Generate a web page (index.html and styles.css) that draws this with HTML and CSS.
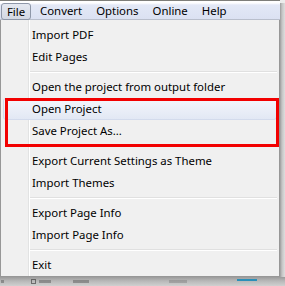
FILE: index.html
```html
<!DOCTYPE html>
<html>
<head>
<meta charset="utf-8">
<link rel="stylesheet" href="styles.css">
</head>
<body>
<div class="frame">
  <div class="upper">
    <div class="main">
      <div class="menubar">
        <span class="mb-item active">File</span>
        <span class="mb-item">Convert</span>
        <span class="mb-item">Options</span>
        <span class="mb-item">Online</span>
        <span class="mb-item">Help</span>
      </div>
      <div class="menu">
        <div class="item">Import PDF</div>
        <div class="item">Edit Pages</div>
        <div class="sep"></div>
        <div class="item">Open the project from output folder</div>
        <div class="item hover">Open Project</div>
        <div class="item">Save Project As...</div>
        <div class="sep"></div>
        <div class="item">Export Current Settings as Theme</div>
        <div class="item">Import Themes</div>
        <div class="sep"></div>
        <div class="item">Export Page Info</div>
        <div class="item">Import Page Info</div>
        <div class="sep"></div>
        <div class="item">Exit</div>
        <div class="callout"></div>
      </div>
    </div>
    <div class="rshadow"></div>
  </div>
  <div class="bottom">
    <span class="bt b1"></span>
    <span class="bt b2"></span>
    <span class="bt b3"></span>
    <span class="bt b4"></span>
    <span class="bt b5"></span>
    <span class="bt b6"></span>
  </div>
</div>
</body>
</html>
```
FILE: styles.css
```css
html, body {
  margin: 0;
  padding: 0;
}
body {
  width: 285px;
  height: 286px;
  overflow: hidden;
  background: #ececec;
  font-family: "Noto Sans", "Open Sans", sans-serif;
  font-size: 11.4px;
  color: #000;
}
.frame {
  display: flex;
  flex-direction: column;
  width: 285px;
  height: 286px;
}
.upper {
  display: flex;
  height: 277px;
}
.main {
  width: 280px;
  display: flex;
  flex-direction: column;
}
.rshadow {
  width: 5px;
  margin-top: 3px;
  background: linear-gradient(to right, #9c9c9c, #c4c4c4 2px, #dedede);
}
.menubar {
  box-sizing: border-box;
  height: 20px;
  border-top: 1px solid #7e7e7a;
  border-bottom: 1px solid #b9bfcc;
  background: linear-gradient(#ffffff 0, #ffffff 2px, #e3e8f6 4px, #dbe1f2 18px);
  display: flex;
  align-items: flex-end;
  padding-left: 1px;
}
.mb-item {
  box-sizing: border-box;
  height: 17px;
  line-height: 15px;
  padding: 0 6px;
  border: 1px solid transparent;
  white-space: nowrap;
}
.mb-item.active {
  width: 30px;
  padding: 0;
  text-align: center;
  border-color: #8e97a8;
  border-radius: 3px;
  background: linear-gradient(#e4e8f0, #d3d8e3);
  margin-right: 2px;
  margin-bottom: -1px;
}
.menu {
  position: relative;
  flex: 1;
  box-sizing: border-box;
  border: 1px solid #979797;
  border-top: 0;
  padding: 4px 2px 0 2px;
  background:
    linear-gradient(to right, transparent 27px, #e2e3e3 27px, #e2e3e3 28px, #ffffff 28px, #ffffff 29px, transparent 29px),
    #f0f0f0;
}
.item {
  height: 22px;
  line-height: 22px;
  padding-left: 29px;
  white-space: nowrap;
}
.item.hover {
  box-sizing: border-box;
  line-height: 20px;
  border: 1px solid #d3dbec;
  border-radius: 3px;
  padding-left: 28px;
  background: linear-gradient(#f4f6fb, #e2e8f4);
}
.sep {
  height: 8px;
  margin-left: 27px;
  margin-right: 0;
  display: flex;
  flex-direction: column;
  justify-content: center;
}
.sep::before {
  content: "";
  display: block;
  height: 1px;
  background: #e0e0e0;
}
.sep::after {
  content: "";
  display: block;
  height: 1px;
  background: #ffffff;
}
.callout {
  position: absolute;
  left: 4px;
  top: 78px;
  width: 274px;
  height: 49px;
  box-sizing: border-box;
  border: 3px solid #f20000;
}
.bottom {
  height: 9px;
  display: flex;
  align-items: flex-start;
  background: linear-gradient(#9a9a9a, #b8b8b8 4px, #d0d0d0);
  position: relative;
}
.bt {
  display: block;
  height: 3px;
  margin-top: 3px;
  background: #6a6a6a;
  opacity: 0.6;
}
.b1 { width: 3px; margin-left: 1px; }
.b2 { width: 5px; height: 5px; margin-left: 27px; margin-top: 2px; box-sizing: border-box; border: 1px solid #333; background: transparent; }
.b3 { width: 12px; margin-left: 3px; }
.b4 { width: 16px; margin-left: 22px; }
.b5 { width: 18px; margin-left: 80px; opacity: 0.35; }
.b6 { width: 20px; margin-left: 50px; height: 2px; margin-top: 2px; background: #2a8fb8; opacity: 1; }
```
